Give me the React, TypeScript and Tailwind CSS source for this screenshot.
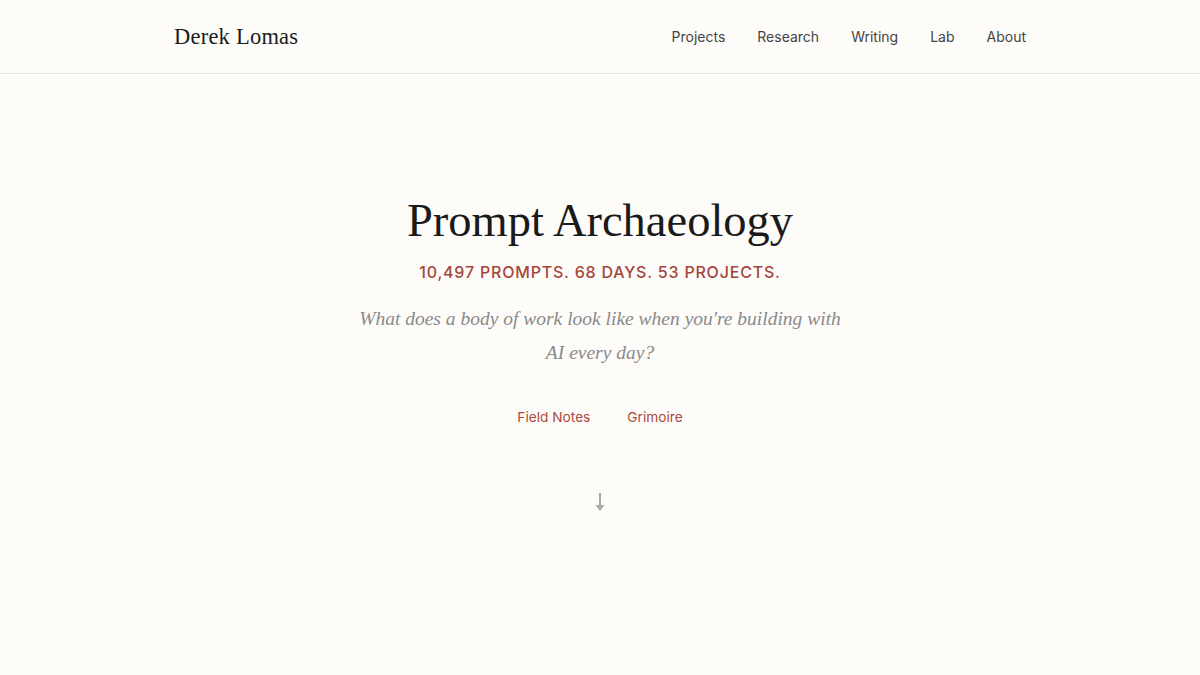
import React from "react";

export default function App() {
  const nav = ["Projects", "Research", "Writing", "Lab", "About"];
  return (
    <div className="min-h-screen bg-[#fdfcf9] font-['Inter','Noto_Sans',sans-serif]">
      <header className="border-b border-[#e8e6e1]">
        <div className="mx-auto flex h-[73px] max-w-[900px] items-center justify-between px-6">
          <a className="font-['Liberation_Serif',serif] text-[22.5px] tracking-[0.01em] text-[#1c1c1c]">Derek Lomas</a>
          <nav className="flex items-center gap-8 text-[14px] text-[#444]">
            {nav.map((n) => (
              <a key={n}>{n}</a>
            ))}
          </nav>
        </div>
      </header>
      <main className="flex flex-col items-center pt-[119px] text-center">
        <h1 className="font-['Liberation_Serif',serif] text-[46.5px] leading-[56px] text-[#1a1a1a]">Prompt Archaeology</h1>
        <p className="mt-[11px] text-[16px] font-medium uppercase tracking-[0.05em] text-[#a5453a]">
          10,497 prompts. 68 days. 53 projects.
        </p>
        <p className="mt-[18px] max-w-[500px] font-['Liberation_Serif',serif] text-[19.5px] italic leading-[34px] text-[#8a8a8a]">
          What does a body of work look like when you're building with AI every day?
        </p>
        <div className="mt-[37px] flex items-center gap-[37px] text-[13.7px] text-[#a84a3e]">
          <a>Field Notes</a>
          <a>Grimoire</a>
        </div>
        <div className="mt-[64px] text-[#a8a8a8]">
          <svg width="12" height="20" viewBox="0 0 12 20" fill="none">
            <path d="M6 1 V16" stroke="currentColor" strokeWidth="2" />
            <path d="M1.5 13 L6 19 L10.5 13 Z" fill="currentColor" />
          </svg>
        </div>
      </main>
    </div>
  );
}
